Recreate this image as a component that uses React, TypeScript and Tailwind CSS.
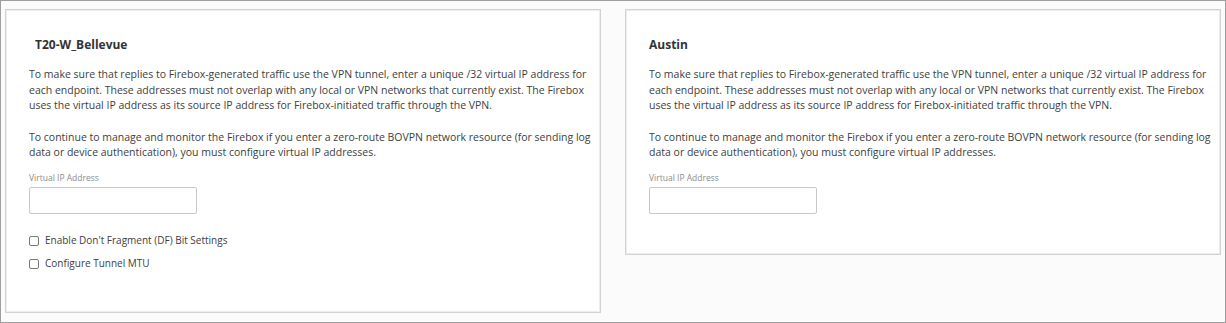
import React from "react";

const P1 = [
  "To make sure that replies to Firebox-generated traffic use the VPN tunnel, enter a unique /32 virtual IP address for",
  "each endpoint. These addresses must not overlap with any local or VPN networks that currently exist. The Firebox",
  "uses the virtual IP address as its source IP address for Firebox-initiated traffic through the VPN.",
];
const P2 = [
  "To continue to manage and monitor the Firebox if you enter a zero-route BOVPN network resource (for sending log",
  "data or device authentication), you must configure virtual IP addresses.",
];

function Lines({ lines }: { lines: string[] }) {
  return (
    <p className="text-[10.5px] leading-[15.5px] text-[#404040] whitespace-nowrap">
      {lines.map((l, i) => (
        <React.Fragment key={i}>
          {l}
          {i < lines.length - 1 && <br />}
        </React.Fragment>
      ))}
    </p>
  );
}

function Check({ label }: { label: string }) {
  return (
    <label className="flex items-center gap-[6px] h-[16px]">
      <span className="w-[10px] h-[10px] border border-[#7a7a7a] rounded-[2px] bg-white shrink-0" />
      <span className="text-[10px] text-[#404040]">{label}</span>
    </label>
  );
}

function Card({ title, indent, extra, height }: { title: string; indent?: boolean; extra?: boolean; height: string }) {
  return (
    <div className={`w-[596px] ${height} bg-white border border-[#d2d2d2] shadow-[inset_0_0_0_1px_#ededed] pl-[23px] pt-[27px] shrink-0`}>
      <h2 className={`text-[12px] font-bold text-[#333] leading-[16px] ${indent ? "pl-[6px]" : ""}`}>{title}</h2>
      <div className="mt-[14px]">
        <Lines lines={P1} />
      </div>
      <div className="mt-[16px]">
        <Lines lines={P2} />
      </div>
      <div className="mt-[12px] text-[8.5px] leading-[10px] text-[#8c8c8c]">Virtual IP Address</div>
      <div className="mt-[4px] w-[168px] h-[27px] border border-[#c8c8c8] rounded-[2px] bg-white" />
      {extra && (
        <div className="mt-[19px] flex flex-col gap-[7px]">
          <Check label="Enable Don't Fragment (DF) Bit Settings" />
          <Check label="Configure Tunnel MTU" />
        </div>
      )}
    </div>
  );
}

export default function App() {
  return (
    <div
      className="w-[1226px] h-[323px] border border-[#9e9e9e] bg-[#fbfbfb] flex items-start gap-[24px] pl-[4px] pt-[8px]"
      style={{ fontFamily: '"Open Sans", "Noto Sans", sans-serif' }}
    >
      <Card title="T20-W_Bellevue" indent extra height="h-[304px]" />
      <Card title="Austin" height="h-[246px]" />
    </div>
  );
}
